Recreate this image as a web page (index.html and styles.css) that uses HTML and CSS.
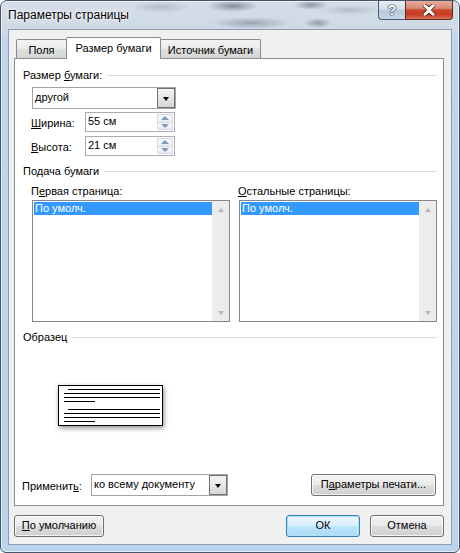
FILE: index.html
```html
<!DOCTYPE html>
<html lang="ru">
<head>
<meta charset="utf-8">
<title>Параметры страницы</title>
<link rel="stylesheet" href="styles.css">
</head>
<body>
<div class="window">
  <div class="titlebar">
    <span class="title">Параметры страницы</span>
    <div class="caption-btns">
      <div class="cap cap-help">?</div>
      <div class="cap cap-close">
        <svg width="16" height="12" viewBox="0 0 16 12"><path d="M3 1 L8 5 L13 1 M3 11 L8 7 L13 11" stroke="#3a1a14" stroke-width="4.2" fill="none"/><path d="M3 1 L8 5 L13 1 M3 11 L8 7 L13 11" stroke="#ffffff" stroke-width="2.4" fill="none"/><path d="M3.5 1.4 L12.5 10.6 M12.5 1.4 L3.5 10.6" stroke="#ffffff" stroke-width="2.4"/></svg>
      </div>
    </div>
  </div>
  <div class="client">
    <div class="tabstrip">
      <div class="tab tab-fields">Поля</div>
      <div class="tab tab-active">Размер бумаги</div>
      <div class="tab tab-source">Источник бумаги</div>
    </div>
    <div class="panel">
      <div class="group-head gh-size"><span class="gh-text">Размер <u>б</u>умаги:</span><i class="rule"></i></div>
      <div class="combo combo-size"><span class="combo-text">другой</span><span class="drop"><i class="tri"></i></span></div>
      <div class="field-row fr-first">
        <span class="field-label"><u>Ш</u>ирина:</span>
        <div class="spin"><span class="spin-text">55 см</span><span class="spin-btns"><span class="spin-b"><i class="up"></i></span><span class="spin-b"><i class="down"></i></span></span></div>
      </div>
      <div class="field-row fr-second">
        <span class="field-label"><u>В</u>ысота:</span>
        <div class="spin"><span class="spin-text">21 см</span><span class="spin-btns"><span class="spin-b"><i class="up"></i></span><span class="spin-b"><i class="down"></i></span></span></div>
      </div>

      <div class="group-head gh-feed"><span class="gh-text">Подача бумаги</span><i class="rule"></i></div>
      <div class="columns">
        <div class="col">
          <div class="col-label">П<u>е</u>рвая страница:</div>
          <div class="listbox">
            <div class="list-items"><div class="item selected">По умолч.</div></div>
            <div class="vscroll"><span class="sarrow"><i class="sup"></i></span><span class="strack"></span><span class="sarrow"><i class="sdown"></i></span></div>
          </div>
        </div>
        <div class="col">
          <div class="col-label"><u>О</u>стальные страницы:</div>
          <div class="listbox">
            <div class="list-items"><div class="item selected">По умолч.</div></div>
            <div class="vscroll"><span class="sarrow"><i class="sup"></i></span><span class="strack"></span><span class="sarrow"><i class="sdown"></i></span></div>
          </div>
        </div>
      </div>

      <div class="group-head gh-sample"><span class="gh-text">Образец</span><i class="rule"></i></div>
      <div class="preview">
        <i class="pl pl-indent"></i><i class="pl"></i><i class="pl"></i><i class="pl pl-short"></i>
        <i class="pl pl-indent pl-para"></i><i class="pl"></i><i class="pl"></i><i class="pl pl-short"></i>
      </div>

      <div class="apply-row">
        <span class="apply-label">Применит<u>ь</u>:</span>
        <div class="combo combo-apply"><span class="combo-text">ко всему документу</span><span class="drop"><i class="tri"></i></span></div>
        <div class="btn btn-print">П<u>а</u>раметры печати...</div>
      </div>
    </div>
    <div class="bottom-row">
      <div class="btn btn-default"><u>П</u>о умолчанию</div>
      <div class="btn btn-ok">ОК</div>
      <div class="btn btn-cancel">Отмена</div>
    </div>
  </div>
</div>
</body>
</html>
```
FILE: styles.css
```css
* { box-sizing: border-box; }
html, body { margin: 0; padding: 0; }
body {
  width: 460px;
  height: 553px;
  overflow: hidden;
  background: #ffffff;
  font-family: "Liberation Sans", Arial, sans-serif;
  font-size: 11px;
  color: #000;
}
u { text-decoration: underline; text-underline-offset: 1px; }

.window {
  width: 460px;
  height: 553px;
  border: 1px solid #45566b;
  border-radius: 7px 7px 6px 6px;
  padding: 0 7px 7px 7px;
  display: flex;
  flex-direction: column;
  background:
    radial-gradient(ellipse 26px 6px at 232px 5px, rgba(70,80,95,.55), rgba(70,80,95,0)),
    radial-gradient(ellipse 18px 5px at 310px 4px, rgba(60,70,85,.45), rgba(60,70,85,0)),
    radial-gradient(ellipse 40px 6px at 250px 22px, rgba(90,100,115,.45), rgba(90,100,115,0)),
    radial-gradient(ellipse 14px 5px at 317px 22px, rgba(70,80,95,.45), rgba(70,80,95,0)),
    radial-gradient(ellipse 30px 5px at 350px 9px, rgba(120,130,145,.35), rgba(120,130,145,0)),
    radial-gradient(ellipse 30px 6px at 160px 6px, rgba(120,130,145,.35), rgba(120,130,145,0)),
    linear-gradient(to bottom, #d4dde7 0, #cfdae6 28px, #bfd5ed 40px, #bcd3ec 100%);
  box-shadow: inset 0 0 0 1px rgba(255,255,255,.55);
}

.titlebar {
  height: 28px;
  display: flex;
  align-items: flex-start;
  flex: none;
}
.title {
  font-size: 12px;
  line-height: 14px;
  margin-top: 7px;
  color: #000;
  text-shadow: 0 0 6px #fff, 0 0 3px #fff;
}
.caption-btns {
  margin-left: auto;
  margin-right: -1px;
  display: flex;
}
.cap {
  height: 19px;
  border: 1px solid #4a5b70;
  border-top: none;
  display: flex;
  align-items: center;
  justify-content: center;
}
.cap-help {
  width: 27px;
  border-right: none;
  border-radius: 0 0 0 4px;
  background: linear-gradient(to bottom, #e6edf5 0, #d4dfeb 45%, #b9c9db 50%, #c6d6e7 100%);
  color: #fff;
  font: bold 14px/1 "Liberation Sans", Arial, sans-serif;
  text-shadow: 0 0 1px #2d3a4b, 0 0 1px #2d3a4b, 0 0 2px #2d3a4b;
}
.cap-close {
  width: 48px;
  border-radius: 0 0 4px 0;
  border-color: #5c2a20;
  background: linear-gradient(to bottom, #e9aa9c 0, #d88a77 40%, #c9452a 50%, #c63c20 75%, #d9735a 100%);
}

.client {
  flex: 1;
  background: #f0f0f0;
  border: 1px solid #8c9cb0;
  padding: 7px 7px 7px 5px;
  display: flex;
  flex-direction: column;
}

.tabstrip {
  height: 21px;
  display: flex;
  align-items: flex-end;
  padding-left: 2px;
  flex: none;
}
.tab {
  height: 19px;
  border: 1px solid #898c95;
  border-bottom: none;
  border-radius: 2px 2px 0 0;
  padding-top: 4px;
  line-height: 13px;
  text-align: center;
  background: linear-gradient(to bottom, #f3f3f3 0, #ebebeb 45%, #dedede 55%, #d6d6d6 100%);
}
.tab-fields { width: 51px; }
.tab-active {
  width: 95px;
  height: 22px;
  margin-left: -1px;
  margin-bottom: -1px;
  background: #fff;
  position: relative;
  z-index: 1;
}
.tab-source { width: 101px; margin-left: -1px; }

.panel {
  height: 448px;
  flex: none;
  background: #fff;
  border: 1px solid #898c95;
  padding: 0 6px 0 8px;
  display: flex;
  flex-direction: column;
}

.group-head {
  height: 15px;
  display: flex;
  align-items: center;
  line-height: 15px;
}
.gh-text { white-space: nowrap; }
.rule {
  flex: 1;
  height: 1px;
  background: #d5dfe5;
  margin-left: 5px;
}
.gh-size { margin-top: 9px; }
.gh-feed { margin-top: 8px; }
.gh-sample { margin-top: 8px; }

.combo {
  display: flex;
  height: 22px;
  border: 1px solid #a3a3a3;
  background: #fff;
}
.combo-text {
  flex: 1;
  padding: 3px 0 0 2px;
  line-height: 13px;
  white-space: nowrap;
  overflow: hidden;
}
.drop {
  width: 18px;
  border: 1px solid #707070;
  margin: 0;
  background: linear-gradient(to bottom, #f4f4f4 0, #e6e6e6 50%, #d6d6d6 100%);
  display: flex;
  align-items: center;
  justify-content: center;
}
.tri {
  width: 0;
  height: 0;
  border-left: 3.5px solid transparent;
  border-right: 3.5px solid transparent;
  border-top: 4px solid #000;
  margin-top: 1px;
}
.combo-size { width: 144px; margin: 4px 0 0 9px; }

.field-row {
  display: flex;
  align-items: center;
  height: 20px;
  margin-left: 8px;
}
.fr-first { margin-top: 3px; }
.fr-second { margin-top: 4px; }
.field-label { width: 54px; line-height: 13px; padding-top: 2px; }
.spin {
  width: 90px;
  height: 20px;
  border: 1px solid #abadb3;
  display: flex;
  background: #fff;
}
.spin-text { flex: 1; padding: 2px 0 0 2px; line-height: 13px; }
.spin-btns {
  width: 16px;
  display: flex;
  flex-direction: column;
  margin: 1px 1px 1px 0;
}
.spin-b {
  flex: 1;
  border: 1px solid #d3dae3;
  background: linear-gradient(to bottom, #f7f9fc, #e8edf3);
  display: flex;
  align-items: center;
  justify-content: center;
}
.spin-b + .spin-b { border-top: none; }
.up, .down { width: 0; height: 0; border-left: 4px solid transparent; border-right: 4px solid transparent; }
.up { border-bottom: 4px solid #7f9bc4; }
.down { border-top: 4px solid #7f9bc4; }

.columns {
  display: flex;
  gap: 8px;
  margin: 5px 0 0 8px;
}
.col { width: 199px; }
.col-label { height: 14px; line-height: 14px; }
.listbox {
  width: 198px;
  height: 122px;
  margin: 2px 0 0 1px;
  border: 1px solid #828790;
  display: flex;
  background: #fff;
}
.list-items { flex: 1; padding: 1px 0 0 1px; }
.item { height: 13px; line-height: 13px; padding-left: 1px; white-space: nowrap; }
.selected { background: #3399ff; color: #fff; }
.vscroll {
  width: 17px;
  display: flex;
  flex-direction: column;
  background: #ececec;
}
.sarrow { height: 17px; display: flex; align-items: center; justify-content: center; }
.strack { flex: 1; }
.sup, .sdown { width: 0; height: 0; border-left: 3.5px solid transparent; border-right: 3.5px solid transparent; }
.sup { border-bottom: 4px solid #b8b8b8; }
.sdown { border-top: 4px solid #b8b8b8; }

.preview {
  width: 105px;
  margin: 40px 0 0 35px;
  border: 1px solid #000;
  background: #fff;
  padding: 3px 2px 3px 5px;
  box-shadow: 1px 2px 5px rgba(0,0,0,.45);
  display: flex;
  flex-direction: column;
}
.pl { display: block; height: 1px; background: #000; margin-top: 3px; }
.pl:first-child { margin-top: 0; }
.pl-indent { margin-left: 4px; }
.pl-short { width: 31px; }
.pl.pl-para { margin-top: 7px; }

.apply-row {
  display: flex;
  align-items: center;
  height: 22px;
  margin: 48px 0 0 -1px;
}
.apply-label { width: 69px; line-height: 13px; padding-top: 2px; }
.combo-apply { width: 137px; }
.btn {
  height: 22px;
  border: 1px solid #707070;
  border-radius: 3px;
  background: linear-gradient(to bottom, #f2f2f2 0, #ebebeb 48%, #dddddd 52%, #cfcfcf 100%);
  box-shadow: inset 0 0 0 1px rgba(255,255,255,.75);
  text-align: center;
  line-height: 13px;
  padding-top: 3px;
  white-space: nowrap;
}
.btn-print { width: 125px; margin-left: auto; margin-right: 1px; }

.bottom-row {
  display: flex;
  margin-top: 9px;
  height: 22px;
}
.btn-default { width: 90px; }
.btn-ok {
  width: 74px;
  margin-left: auto;
  border-color: #3c7fb1;
  background: linear-gradient(to bottom, #eaf6fd 0, #d9f0fc 48%, #bee6fd 52%, #a7d9f5 100%);
  box-shadow: inset 0 0 0 1px #a9e1fa, inset 0 0 2px 1px rgba(255,255,255,.6);
}
.btn-cancel { width: 74px; margin-left: 10px; }
```
